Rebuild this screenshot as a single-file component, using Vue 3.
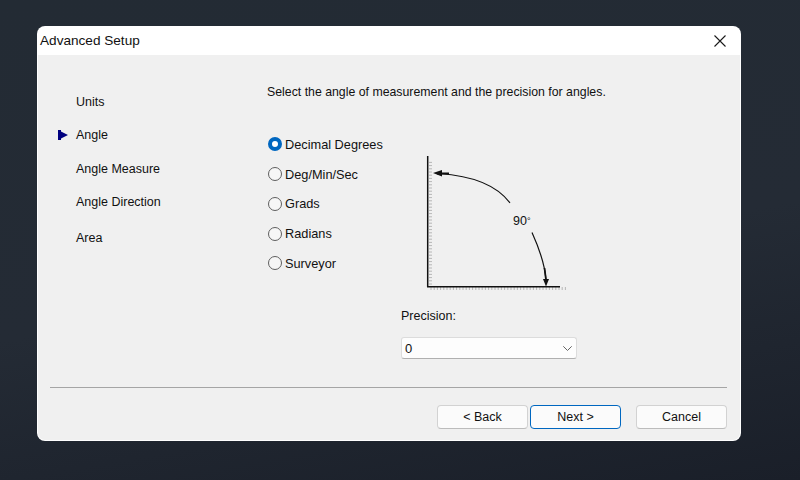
<script setup>
const steps = [
  { label: 'Units', active: false },
  { label: 'Angle', active: true },
  { label: 'Angle Measure', active: false },
  { label: 'Angle Direction', active: false },
  { label: 'Area', active: false }
]
const options = ['Decimal Degrees', 'Deg/Min/Sec', 'Grads', 'Radians', 'Surveyor']
const vTicks = Array.from({ length: 39 }, (_, i) => 284 - i * 3.2 - 150)
const hTicks = Array.from({ length: 43 }, (_, i) => 431 + i * 3.2 - 401)
</script>

<template>
  <div class="desktop">
    <section class="window">
      <header class="titlebar">
        <span class="title">Advanced Setup</span>
        <svg class="close" width="12" height="12" viewBox="0 0 12 12" aria-label="Close">
          <path d="M0.5 0.5 L11.5 11.5 M11.5 0.5 L0.5 11.5" stroke="#1a1a1a" stroke-width="1.1" fill="none" />
        </svg>
      </header>
      <div class="panel">
        <div class="content">
          <nav class="steps">
            <div v-for="s in steps" :key="s.label" class="step">
              <svg v-if="s.active" class="marker" width="10" height="10" viewBox="0 0 10 10">
                <path d="M0 0 H3 V1.5 L10 5 L3 8.5 V10 H0 Z" fill="#000080" />
              </svg>
              <span v-else class="marker"></span>
              <span>{{ s.label }}</span>
            </div>
          </nav>
          <main class="main">
            <p class="lead">Select the angle of measurement and the precision for angles.</p>
            <div class="columns">
              <div class="options">
                <label v-for="(o, i) in options" :key="o" class="option">
                  <span class="radio" :class="{ checked: i === 0 }"></span>
                  <span>{{ o }}</span>
                </label>
              </div>
              <div class="figure">
                <svg class="diagram" width="176" height="150" viewBox="0 0 176 150">
                  <g stroke="#a8a8a8" stroke-width="0.8">
                    <line v-for="y in vTicks" :key="'v' + y" x1="28" x2="31" :y1="y" :y2="y" />
                    <line v-for="x in hTicks" :key="'h' + x" :x1="x" :x2="x" y1="137" y2="140" />
                  </g>
                  <path d="M26.7 6 V136.8 H159" stroke="#111" stroke-width="1.5" fill="none" />
                  <path d="M38 23.5 C60 25 92 30 109 53" stroke="#111" stroke-width="1.1" fill="none" />
                  <path d="M36 23.5 H48" stroke="#111" stroke-width="1.8" fill="none" />
                  <path d="M32 23 L41 20 L41 26.5 Z" fill="#111" />
                  <path d="M131 82.5 C138 98 144 116 145 130" stroke="#111" stroke-width="1.2" fill="none" />
                  <path d="M143.5 118 L145 130" stroke="#111" stroke-width="1.8" fill="none" />
                  <path d="M145 136.5 L142 129 L148 129 Z" fill="#111" />
                  <text class="degrees" x="112" y="75">90<tspan class="deg" dy="-1">°</tspan></text>
                </svg>
                <div class="precision-label">Precision:</div>
                <div class="select">
                  <span class="value">0</span>
                  <svg width="9" height="5" viewBox="0 0 9 5">
                    <path d="M0.3 0.3 L4.5 4.5 L8.7 0.3" stroke="#666" stroke-width="1" fill="none" />
                  </svg>
                </div>
              </div>
            </div>
          </main>
        </div>
        <footer class="footer">
          <div class="actions">
            <button class="btn" type="button">&lt; Back</button>
            <button class="btn primary" type="button">Next &gt;</button>
            <button class="btn cancel" type="button">Cancel</button>
          </div>
        </footer>
      </div>
    </section>
  </div>
</template>

<style>
html, body { margin: 0; background: #20272f; }
</style>

<style scoped>
.desktop {
  width: 800px;
  height: 480px;
  box-sizing: border-box;
  padding: 26px 59px 39px 37px;
  background: linear-gradient(170deg, #232b34 0%, #242b35 55%, #1a1f29 100%);
  font-family: "Liberation Sans", Arial, sans-serif;
  font-size: 12.5px;
  color: #111;
}
.window {
  height: 100%;
  box-sizing: border-box;
  display: flex;
  flex-direction: column;
  background: #fff;
  border-radius: 8px;
  padding: 0 1px 1px;
  overflow: hidden;
}
.titlebar {
  height: 29px;
  flex: none;
  display: flex;
  align-items: center;
  justify-content: space-between;
  padding: 0 13px 0 2px;
}
.title { font-size: 13.6px; }
.close { margin-right: 1px; }
.panel {
  flex: 1;
  display: flex;
  flex-direction: column;
  background: #f0f0f0;
  border-radius: 0 0 7px 7px;
}
.content { flex: 1; display: flex; }
.steps {
  width: 229px;
  flex: none;
  box-sizing: border-box;
  padding: 30.4px 0 0 20px;
}
.step {
  height: 33.4px;
  display: flex;
  align-items: center;
  gap: 8px;
}
.step:last-child { margin-top: 2px; }
.marker { width: 10px; height: 10px; flex: none; display: block; }
.main { flex: 1; padding-top: 29px; }
.lead { margin: 0 0 29.5px; line-height: 16px; font-size: 12.32px; }
.columns { display: flex; }
.options { width: 134px; flex: none; display: flex; flex-direction: column; font-size: 12.75px; }
.option { height: 29.75px; display: flex; align-items: center; gap: 3px; position: relative; left: 1px; }
.radio {
  width: 14px;
  height: 14px;
  box-sizing: border-box;
  border: 1px solid #5f5f5f;
  border-radius: 50%;
  background: #f6f6f6;
  flex: none;
}
.radio.checked { border: 4px solid #0067c0; background: #fff; }
.figure { width: 176px; flex: none; padding-top: 20.5px; }
.diagram { display: block; }
.degrees { font-size: 12.5px; fill: #111; font-family: "Liberation Sans", Arial, sans-serif; }
.deg { font-size: 9px; }
.precision-label { margin-top: 8px; line-height: 16px; }
.select {
  margin-top: 13px;
  height: 22px;
  box-sizing: border-box;
  display: flex;
  align-items: center;
  justify-content: space-between;
  padding: 0 4px 0 3px;
  background: #fdfdfd;
  border: 1px solid #dcdcdc;
  border-bottom-color: #b0b0b0;
  border-radius: 3px;
}
.value { font-size: 13px; }
.footer { margin: 0 13px 0 12px; border-top: 1px solid #a5a5a5; padding: 17px 0 11px; }
.actions { display: flex; justify-content: flex-end; gap: 2px; }
.btn {
  width: 91px;
  height: 24px;
  padding: 0;
  font: inherit;
  color: #111;
  background: #fbfbfb;
  border: 1px solid #d2d2d2;
  border-bottom-color: #bcbcbc;
  border-radius: 4px;
}
.btn.primary { border: 1px solid #0067c0; }
.btn.cancel { margin-left: 13px; }
</style>
